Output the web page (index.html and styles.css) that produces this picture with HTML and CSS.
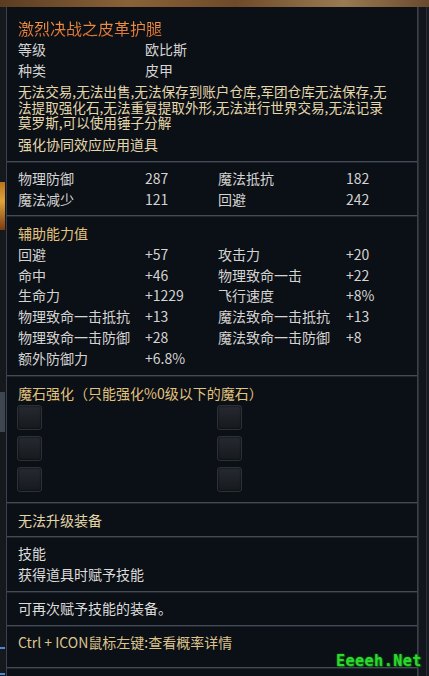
FILE: index.html
```html
<!DOCTYPE html>
<html lang="zh-CN">
<head>
    <meta charset="UTF-8">
    <meta name="viewport" content="width=device-width, initial-scale=1.0">
    <title>激烈决战之皮革护腿</title>
    <link rel="stylesheet" href="styles.css">
</head>
<body>
    <div class="scene">
        <div class="side-left">
            <span class="bit bit-gold"></span>
            <span class="bit bit-grey"></span>
            <span class="bit bit-blue"></span>
            <span class="bit bit-blue2"></span>
        </div>

        <div class="tooltip">
            <!-- 基本信息 -->
            <div class="section head">
                <div class="title">激烈决战之皮革护腿</div>
                <div class="kv"><span>等级</span><span>欧比斯</span></div>
                <div class="kv"><span>种类</span><span>皮甲</span></div>
                <div class="desc">
                    <div>无法交易,无法出售,无法保存到账户仓库,军团仓库无法保存,无</div>
                    <div>法提取强化石,无法重复提取外形,无法进行世界交易,无法记录</div>
                    <div>莫罗斯,可以使用锤子分解</div>
                </div>
                <div class="note">强化协同效应应用道具</div>
            </div>

            <!-- 基础属性 -->
            <div class="section base double">
                <div class="stats">
                    <span>物理防御</span><span>287</span><span>魔法抵抗</span><span>182</span>
                    <span>魔法减少</span><span>121</span><span>回避</span><span>242</span>
                </div>
            </div>

            <!-- 辅助能力值 -->
            <div class="section aux double">
                <div class="sub-title">辅助能力值</div>
                <div class="stats tight">
                    <span>回避</span><span>+57</span><span>攻击力</span><span>+20</span>
                    <span>命中</span><span>+46</span><span>物理致命一击</span><span>+22</span>
                    <span>生命力</span><span>+1229</span><span>飞行速度</span><span>+8%</span>
                    <span>物理致命一击抵抗</span><span>+13</span><span>魔法致命一击抵抗</span><span>+13</span>
                    <span>物理致命一击防御</span><span>+28</span><span>魔法致命一击防御</span><span>+8</span>
                    <span>额外防御力</span><span>+6.8%</span>
                </div>
            </div>

            <!-- 魔石 -->
            <div class="section stones double">
                <div class="sub-title">魔石强化（只能强化%0级以下的魔石）</div>
                <div class="slots">
                    <span class="slot"></span><span class="slot"></span>
                    <span class="slot"></span><span class="slot"></span>
                    <span class="slot"></span><span class="slot"></span>
                </div>
            </div>

            <div class="section line cream double">无法升级装备</div>

            <div class="section line skill double">
                <div>技能</div>
                <div>获得道具时赋予技能</div>
            </div>

            <div class="section line skill double">可再次赋予技能的装备。</div>

            <div class="section line gold double">Ctrl + ICON鼠标左键:查看概率详情</div>

            <div class="section tail double"></div>
        </div>

        <div class="side-right"></div>

        <div class="watermark">Eeeeh.Net</div>
    </div>
</body>
</html>
```

FILE: styles.css
```css
body {
    margin: 0;
    background: #12151b;
    font-family: "Noto Sans CJK SC", "Liberation Sans", sans-serif;
    font-size: 14px;
}

.scene {
    position: relative;
    width: 429px;
    height: 676px;
    overflow: hidden;
    display: flex;
    background: linear-gradient(to right, #5b3c22 0, #8a6238 30%, #6f4a2a 55%, #9a7a52 80%, #6a4a2e 100%);
}

.side-left {
    position: relative;
    width: 6px;
    margin-top: 7px;
    background: #15181d;
}

.bit {
    position: absolute;
    left: 0;
    width: 5px;
}

.bit-gold {
    top: 175px;
    height: 48px;
    background: linear-gradient(to bottom, #b8741c, #e0a43a 40%, #7a3a12);
}

.bit-grey {
    top: 385px;
    height: 40px;
    background: #3e4650;
}

.bit-blue {
    top: 640px;
    height: 2px;
    background: #4a8ad0;
}

.bit-blue2 {
    top: 666px;
    height: 2px;
    background: #4a8ad0;
}

.side-right {
    width: 11px;
    margin-top: 7px;
    background: linear-gradient(to right, #2a2f38 0, #2a2f38 1px, #12161c 1px, #12161c 8px, #2a2f38 8px, #2a2f38 9px, #171b21 9px);
}

.tooltip {
    width: 410px;
    margin-top: 7px;
    border-left: 1px solid #3b414c;
    border-right: 1px solid #3b414c;
    background: #0b0f16;
    color: #d4d4d2;
}

.section {
    padding: 0 10px 0 11px;
}

.section.double {
    border-top: 1px solid #444b57;
    box-shadow: inset 0 1px 0 #20252e;
}

.head {
    padding-top: 10px;
    height: 144px;
}

.title {
    font-size: 16px;
    line-height: 22px;
    color: #ec8842;
    background: linear-gradient(to bottom, #f7a050, #d86a2c);
    -webkit-background-clip: text;
    background-clip: text;
    -webkit-text-fill-color: transparent;
}

.kv {
    display: grid;
    grid-template-columns: 127px 1fr;
    line-height: 21px;
}

.desc {
    margin-top: 3px;
    font-size: 13.6px;
    line-height: 15.5px;
    color: #e4d7ac;
    white-space: nowrap;
}

.note {
    margin-top: 3px;
    line-height: 21px;
    color: #e4d7ac;
}

.base {
    padding-top: 6px;
    height: 47px;
}

.stats {
    display: grid;
    grid-template-columns: 127px 73px 128px auto;
    line-height: 21px;
    white-space: nowrap;
}

.stats.tight {
    line-height: 20.7px;
}

.aux {
    padding-top: 7px;
    height: 152px;
}

.sub-title {
    line-height: 21px;
    color: #e2c47e;
}

.stones {
    padding-top: 7px;
    height: 119px;
}

.slots {
    display: grid;
    grid-template-columns: 200px 200px;
    row-gap: 6px;
    margin: 1px 0 0 -1px;
}

.slot {
    width: 23px;
    height: 23px;
    border: 1px solid #2c3138;
    border-radius: 3px;
    background: linear-gradient(to bottom, #262a30, #16191e);
    box-shadow: inset 0 0 2px #000;
}

.line {
    padding-top: 7px;
    padding-bottom: 5px;
    line-height: 21px;
}

.cream {
    color: #e2d5a6;
}

.skill {
    padding-top: 6px;
    padding-bottom: 6px;
    color: #dcdcda;
}

.gold {
    padding-top: 6px;
    padding-bottom: 14px;
    color: #dcc48c;
}

.tail {
    height: 20px;
}

.watermark {
    position: absolute;
    left: 336px;
    top: 652px;
    font-family: "DejaVu Sans Mono", monospace;
    font-size: 15px;
    font-weight: bold;
    color: #2ed82e;
    letter-spacing: 0.5px;
    text-shadow: 0 0 2px #1a9a1a, 1px 1px 1px #0f5a0f;
}
```
